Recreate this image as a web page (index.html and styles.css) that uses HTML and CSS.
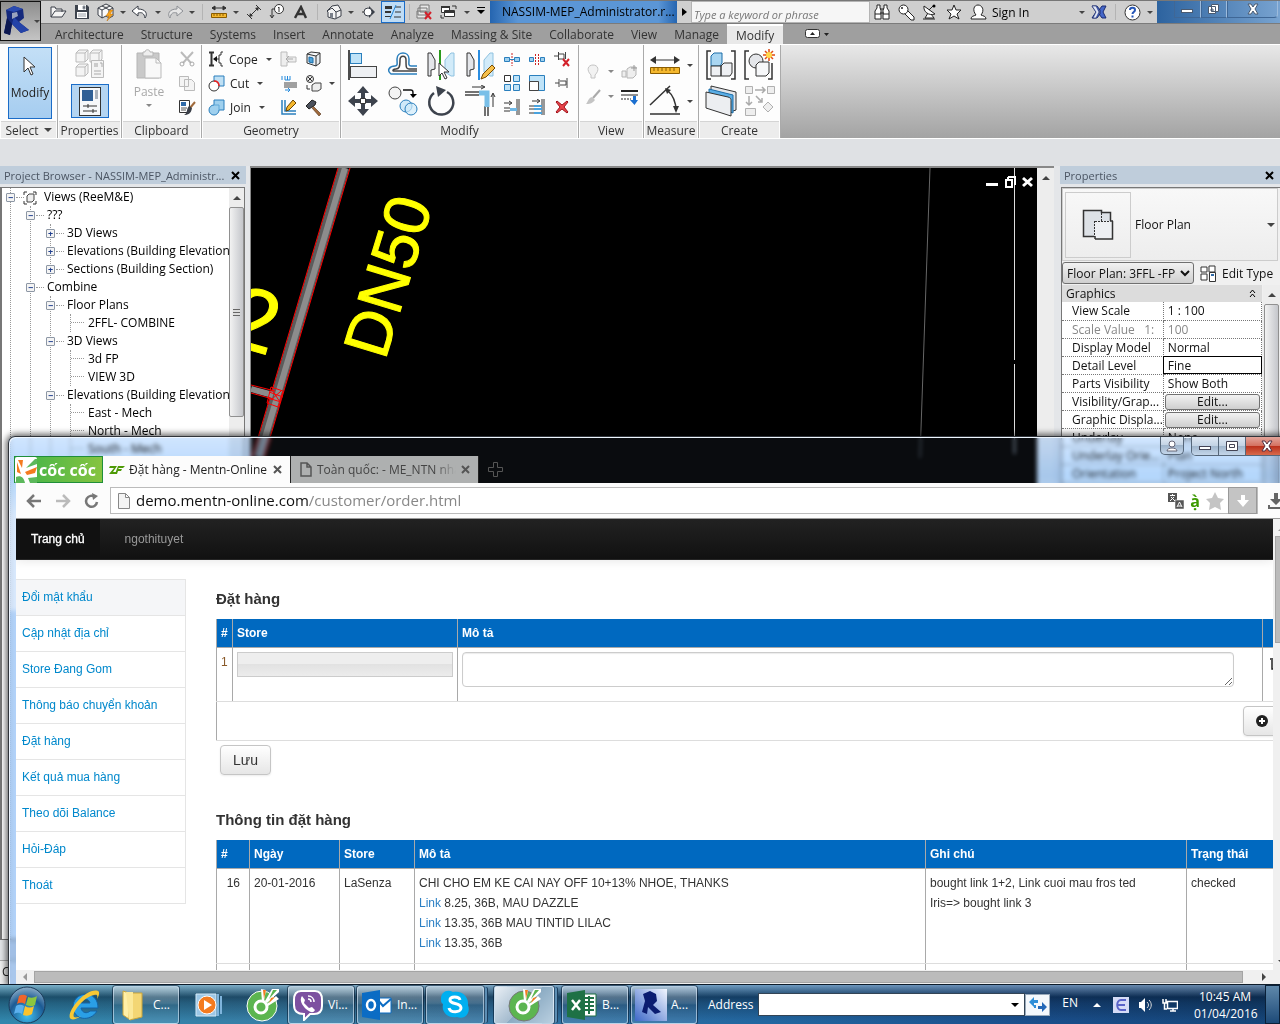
FILE: index.html
```html
<!DOCTYPE html>
<html lang="vi">

<head>
    <meta charset="UTF-8">
    <meta name="viewport" content="width=device-width, initial-scale=1.0">
    <title>Đặt hàng - Mentn-Online</title>
    <link rel="stylesheet" href="styles.css">
</head>

<body>
<div class="desktop">

    <!-- Revit window -->
    <div class="revit">
        <header class="revit-head">
            <button class="app-button" aria-label="Application menu">
                <svg width="32" height="32" viewBox="0 0 32 32">
                    <path d="M4 5l8-4 9 3 1 9-5 4 10 8-8 3-9-9-2 11-6-2 3-15z" fill="#15297c"/>
                    <path d="M4 5l8-4 9 3-9 3z" fill="#2b4bb0"/>
                    <path d="M12 12l5 5 10 8-8 3-9-9z" fill="#2443a8"/>
                    <path d="M5 13l5 6-2 11-6-2z" fill="#0c1850"/>
                    <path d="M10 8l5-1 1 4-6 3z" fill="#9aa3bd"/>
                </svg>
                <i class="caret"></i>
            </button>
            <div class="revit-bars">
                <div class="quick-bar">
                    <div class="quick-tools">
                        <button class="tool" aria-label="Open"><svg width="18" height="16" viewBox="0 0 18 16"><path d="M2 13V3h4l1 2h6v3M2 13l4-6h11l-4 6z" fill="#f4f4f4" stroke="#3a3f48"/></svg></button>
                        <button class="tool" aria-label="Save"><svg width="16" height="16" viewBox="0 0 16 16"><path d="M1 1h12l2 2v12H1z" fill="#3d434d"/><path d="M4 1h8v5H4zM3 8h10v6H3z" fill="#fff"/><path d="M9 2h2v3H9zM4 10h8M4 12h8" fill="#3d434d" stroke="#9aa0a8"/></svg></button>
                        <button class="tool" aria-label="Synchronize"><svg width="18" height="18" viewBox="0 0 18 18"><path d="M1 5l4-2 4 2 4-2 3 2v8l-4 2-3-2-4 2-4-3zM5 3l4-2 4 2M1 5l4 2v8M5 7l4-2 3 2v7M12 7l4-2" fill="#fafafa" stroke="#3a3f48"/><path d="M13 7l-4 6h3l-2 5 6-7h-3l3-4z" fill="#f5a21b" stroke="#c06c00" stroke-width=".5"/></svg></button>
                        <button class="drop" aria-label="Sync options"><i class="caret"></i></button>
                        <button class="tool" aria-label="Undo"><svg width="18" height="14" viewBox="0 0 18 14"><path d="M7 1L1 6l6 5V8c4-1 6 0 7 5 3-4 1-9-7-9z" fill="#fff" stroke="#3a3f48"/></svg></button>
                        <button class="drop" aria-label="Undo list"><i class="caret"></i></button>
                        <button class="tool" aria-label="Redo"><svg width="18" height="14" viewBox="0 0 18 14"><path d="M11 1l6 5-6 5V8C7 7 5 8 4 13 1 9 3 4 11 4z" fill="#e6e6e6" stroke="#8d9095"/></svg></button>
                        <button class="drop" aria-label="Redo list"><i class="caret"></i></button>
                        <span class="sep"></span>
                        <button class="tool" aria-label="Measure"><svg width="16" height="14" viewBox="0 0 16 14"><path d="M1 3h14M1 3l3-2v4zM15 3l-3-2v4z" stroke="#333" fill="#333"/><path d="M.5 8.500h15v4H.5z" fill="#f5b82e" stroke="#8a5c00"/><path d="M3 9v2M6 9v2M9 9v2M12 9v2" stroke="#8a5c00"/></svg></button>
                        <button class="drop" aria-label="Measure options"><i class="caret"></i></button>
                        <button class="tool" aria-label="Aligned dimension"><svg width="16" height="16" viewBox="0 0 16 16"><path d="M4 12l8-8" stroke="#333" fill="none"/><path d="M13 3l-1 4-3-3zM3 13l1-4 3 3z" fill="#333"/><path d="M10 1l5 5M1 10l5 5" stroke="#333"/></svg></button>
                        <button class="tool" aria-label="Tag"><svg width="16" height="16" viewBox="0 0 16 16"><circle cx="10" cy="5" r="4.500" fill="#fff" stroke="#333"/><path d="M9 4l1-1v5M5 5H3v8M1 11l2 3 2-3" stroke="#333" fill="none"/></svg></button>
                        <button class="tool" aria-label="Text"><svg width="14" height="14" viewBox="0 0 14 14"><path d="M1 13L7 2l5 11M4 9h6" fill="none" stroke="#333" stroke-width="2.400"/></svg></button>
                        <span class="sep"></span>
                        <button class="tool" aria-label="Default 3D view"><svg width="16" height="16" viewBox="0 0 16 16"><path d="M1 7l5-5 6-1 3 5v6l-6 3-7-2V8zM1 7l5-3 4 4v6M10 8l5-2" fill="#f4f4f4" stroke="#3a3f48"/><path d="M4 9h3v5L4 13z" fill="#7a808a"/></svg></button>
                        <button class="drop" aria-label="3D view options"><i class="caret"></i></button>
                        <button class="tool" aria-label="Section"><svg width="14" height="14" viewBox="0 0 14 14"><path d="M7 1l6 6-6 6z" fill="#3a3f48"/><circle cx="6" cy="7" r="4" fill="#fff" stroke="#3a3f48"/><path d="M0 7h2" stroke="#333"/></svg></button>
                        <button class="tool tool-on" aria-label="Thin lines"><svg width="18" height="16" viewBox="0 0 18 16"><path d="M1 2h7v3H1zM1 7h6v2H1zM1 12h6v1H1z" fill="#333"/><path d="M11 3h6M11 8h6M10 13h7" stroke="#333"/><path d="M12 1L6 15" stroke="#2389dc"/></svg></button>
                        <span class="sep"></span>
                        <button class="tool" aria-label="Close hidden windows"><svg width="18" height="16" viewBox="0 0 18 16"><path d="M4 1h9v7H4zM2 4h9v7H2zM1 7h9v7H1z" fill="#e8e8e8" stroke="#777"/><path d="M9 8l6 7M15 8l-6 7" stroke="#d3202a" stroke-width="2"/></svg></button>
                        <button class="tool" aria-label="Switch windows"><svg width="18" height="16" viewBox="0 0 18 16"><path d="M4.500 6.500h10v6h-10zM1.500 2.500h8v6h-8z" fill="#fff" stroke="#333"/><path d="M1 2h9v2H1zM4 7h11v2H4z" fill="#333"/><path d="M12 2h4v3M1 11v3h3" fill="none" stroke="#333"/></svg></button>
                        <button class="drop" aria-label="Windows list"><i class="caret"></i></button>
                        <button class="drop last" aria-label="Customize"><i class="caret caret-line"></i></button>
                    </div>
                    <div class="revit-title">NASSIM-MEP_Administrator.r...</div>
                    <button class="search-toggle" aria-label="Hide search"><svg width="5" height="8"><path d="M0 0l5 4-5 4z"/></svg></button>
                    <input class="keyword" type="text" placeholder="Type a keyword or phrase" aria-label="Search help">
                    <div class="info-tools">
                        <button class="tool" aria-label="Search"><svg width="16" height="16" viewBox="0 0 16 16"><path d="M3 1h3v3l1 2v9H1V7l2-3zM10 1h3v3l2 3v8H9V6l1-2zM6 5h4M6 9h4M1 10h6M9 10h6" fill="#fff" stroke="#222"/></svg></button>
                        <button class="tool" aria-label="Subscription"><svg width="17" height="17" viewBox="0 0 17 17"><path d="M6 9l7 7h3v-3L9 6" fill="#fff" stroke="#222"/><circle cx="5.500" cy="5.500" r="4.500" fill="#fff" stroke="#222"/><circle cx="4" cy="4" r="1" fill="#222"/></svg></button>
                        <button class="tool" aria-label="Communication"><svg width="16" height="16" viewBox="0 0 16 16"><path d="M6 9l-3 5h9l-3-4" fill="#fff" stroke="#222"/><path d="M2 2c-1 6 5 10 11 8z" fill="#fff" stroke="#222"/><path d="M7 6l5-5M1 15h12" stroke="#222"/><circle cx="12" cy="2" r="1.500"/></svg></button>
                        <button class="tool" aria-label="Favorites"><svg width="16" height="16" viewBox="0 0 16 16"><path d="M8 1l2 5h5l-4 4 2 5-5-3-5 3 2-5-4-4h5z" fill="#fff" stroke="#222"/></svg></button>
                        <button class="sign-in"><svg width="17" height="17" viewBox="0 0 17 17"><path d="M1 15c0-3 3-3 5-4-4-5-2-10 2-10s7 5 3 10c2 1 5 1 5 4z" fill="#fff" stroke="#222"/></svg>Sign In</button>
                        <button class="drop drop-far" aria-label="Account"><i class="caret"></i></button>
                        <button class="tool" aria-label="Exchange apps"><svg width="16" height="14" viewBox="0 0 16 14"><path d="M1 1h5l3 4v4l-3 4H1l4-6zM15 1h-4L8 5v4l3 4h4l-3-6z" fill="#4567c9" stroke="#1c2c70"/><path d="M1 1h4l3 6-3 6H2l3-6z" fill="#dfe6f6" stroke="#1c2c70" stroke-width=".6"/></svg></button>
                        <span class="sep"></span>
                        <button class="tool" aria-label="Help"><svg width="17" height="17" viewBox="0 0 17 17"><circle cx="8.500" cy="8.500" r="7.500" fill="#fff" stroke="#333"/><path d="M6 6c0-3 5-3 5 0 0 2-2.500 2-2.500 4M8.500 11.500v2" fill="none" stroke="#2556b8" stroke-width="2"/></svg></button>
                        <button class="drop" aria-label="Help options"><i class="caret"></i></button>
                    </div>
                    <div class="revit-controls">
                        <button aria-label="Minimize"><svg width="14" height="12"><rect x="1.500" y="6.500" width="11" height="3" fill="#fff" stroke="#4a5a70"/></svg></button>
                        <button aria-label="Restore"><svg width="14" height="12"><path d="M4.500 1.500h7v7h-7zM1.500 3.500h7v7h-7zM4 6h2v2H4z" fill="#fff" stroke="#4a5a70"/></svg></button>
                        <button class="wide" aria-label="Close"><svg width="14" height="12"><path d="M2 1h3l2 3 2-3h3L9 6l3 5H9L7 8l-2 3H2l3-5z" fill="#fff" stroke="#4a5a70"/></svg></button>
                    </div>
                </div>
                <nav class="ribbon-tabs">
                    <button>Architecture</button>
                    <button>Structure</button>
                    <button>Systems</button>
                    <button>Insert</button>
                    <button>Annotate</button>
                    <button>Analyze</button>
                    <button>Massing &amp; Site</button>
                    <button>Collaborate</button>
                    <button>View</button>
                    <button>Manage</button>
                    <button class="active">Modify</button>
                    <button class="ribbon-min" aria-label="Minimize ribbon"><svg width="25" height="10"><rect x=".5" y=".5" width="14" height="8" rx="2" fill="#fff" stroke="#333"/><path d="M5 6l2.500-3L10 6zM19 4h5l-2.500 3z" fill="#222"/></svg></button>
                </nav>
            </div>
        </header>

        <div class="ribbon">
            <section class="panel p-select">
                <div class="panel-body">
                    <button class="modify-on"><svg width="14" height="20" viewBox="0 0 14 20"><path d="M1 1v15l4-4 3 7 2-1-3-7h5z" fill="#fff" stroke="#333"/></svg>Modify</button>
                </div>
                <h2>Select <i class="caret big"></i></h2>
            </section>
            <section class="panel p-properties">
                <div class="panel-body stack">
                    <button class="big-icon" aria-label="Type properties"><svg width="32" height="30" viewBox="0 0 32 30"><g fill="#f4f4f4" stroke="#bbb"><path d="M2 4l3-3h9v9l-3 3H2zM16 4l3-3h9v9l-3 3h-9zM2 18l3-3h9v9l-3 3H2z"/><path d="M2 4h9v9M11 4l3-3M16 4h9v9M25 4l3-3M2 18h9v9M11 18l3-3" fill="none"/><path d="M17.500 11.500h12v17h-12z"/></g><path d="M20 14h4v4h-4z" fill="#ccc"/><path d="M26 14h2v4M20 22h7M20 25h7" stroke="#aaa" fill="none"/></svg></button>
                    <button class="big-icon prop-on" aria-label="Properties"><svg width="22" height="29" viewBox="0 0 22 29"><rect x=".5" y=".5" width="21" height="28" fill="#f6f8fa" stroke="#333"/><path d="M3 3h11v11H3z" fill="#2f5f95"/><path d="M16 3h3v9h-3z" fill="#aab2bb"/><path d="M4 19h14M4 24h14M9 17v4M14 22v4" stroke="#333"/></svg></button>
                </div>
                <h2>Properties</h2>
            </section>
            <section class="panel p-clipboard">
                <div class="panel-body">
                    <button class="paste" disabled><svg width="26" height="30" viewBox="0 0 26 30"><path d="M1 4h22v25H1z" fill="#c9c9c9" stroke="#b5b5b5"/><path d="M7 3h2c0-3 5-3 5 0h3v4H7z" fill="#eee" stroke="#b5b5b5"/><path d="M9 9h11l5 5v15H9z" fill="#f8f8f8" stroke="#bbb"/><path d="M20 9v5h5" fill="none" stroke="#bbb"/></svg>Paste<i class="caret"></i></button>
                    <div class="small-grid one">
                        <button aria-label="Cut"><svg width="16" height="16" viewBox="0 0 16 16"><path d="M2 1l10 11M14 1L4 12" stroke="#bbb" stroke-width="2"/><g fill="none" stroke="#aaa"><circle cx="3" cy="13" r="2"/><circle cx="13" cy="13" r="2"/></g></svg></button>
                        <button aria-label="Copy"><svg width="16" height="16" viewBox="0 0 16 16"><path d="M.5 1.500h9v10h-9zM5.500 4.500h7l3 3v8h-10z" fill="#f4f4f4" stroke="#bbb"/></svg></button>
                        <button aria-label="Match type"><svg width="18" height="17" viewBox="0 0 18 17"><path d="M1.500 1.500h10v12h-10z" fill="#fff" stroke="#333"/><path d="M3 3h5v4H3z" fill="#2f6aa8"/><path d="M3 9h6M3 11h5" stroke="#555"/><path d="M17 3l-5 6" stroke="#a06a3c" stroke-width="2"/><path d="M11 7l3 2c-1 6-4 7-8 7 4-2 2-6 5-9z" fill="#3a3f48"/></svg></button>
                    </div>
                </div>
                <h2>Clipboard</h2>
            </section>
            <section class="panel p-geometry">
                <div class="panel-body">
                    <div class="text-tools">
                        <button><svg width="16" height="16" viewBox="0 0 16 16"><path d="M1 1.500h5M1 14.500h5M3.500 2v12" stroke="#333" stroke-width="2" fill="none"/><path d="M15 1h-2v3h-2v8h2v3h2M11 8H6" stroke="#333" fill="none"/><path d="M5 8l4-3v6z" fill="#111"/></svg>Cope<i class="caret"></i></button>
                        <button><svg width="17" height="17" viewBox="0 0 17 17"><path d="M6 1h10v10H6z" fill="#bfe0f4" stroke="#2a7fbd"/><circle cx="6" cy="11" r="5" fill="#fff" stroke="#333"/><path d="M6 6c3 0 5 2 5 5" stroke="#e22" fill="none" stroke-width="1.500"/></svg>Cut<i class="caret"></i></button>
                        <button><svg width="17" height="17" viewBox="0 0 17 17"><path d="M6 1h10v10h-5a5 5 0 1 1-5-5z" fill="#9fd0ee" stroke="#2a7fbd"/><path d="M6 6h5v5" stroke="#5fa8d8" fill="none"/></svg>Join<i class="caret"></i></button>
                    </div>
                    <div class="small-grid two">
                        <button aria-label="Wall opening"><svg width="17" height="16" viewBox="0 0 17 16"><path d="M1 1h6v5h9v5H7v4H1z" fill="#eee" stroke="#bbb"/><path d="M13 8H6l3-3M6 8l3 3" stroke="#aaa" fill="none"/></svg></button>
                        <button aria-label="Split face"><svg width="16" height="16" viewBox="0 0 16 16"><path d="M1 3l9 2v10l-9-3zM10 5l4-3v10l-4 3M1 3l4-2 9 1" fill="#e8ecf0" stroke="#333"/><path d="M3 6l4 1v5l-4-1z" fill="#4ea3da" stroke="#1b6ca8"/></svg></button>
                        <button aria-label="Beam joins"><svg width="17" height="17" viewBox="0 0 17 17"><path d="M2 1v4M5 1v4h5V1M7.500 1v4M5 15h5M8 13l2 2-2 2" stroke="#2389dc" fill="none"/><path d="M4 8h13M4 10h13M4 12h13" stroke="#444"/></svg></button>
                        <button aria-label="Paint"><svg width="17" height="17" viewBox="0 0 17 17"><circle cx="5" cy="4" r="3.500" fill="#eee" stroke="#333"/><path d="M3 2l4 4M7 2L3 6" stroke="#333"/><path d="M7 10l3-2h6v6l-3 2H7z" fill="#eee" stroke="#444"/><path d="M2 10v4h3" stroke="#333" fill="none"/></svg></button>
                        <button aria-label="Edit wall joins"><svg width="18" height="17" viewBox="0 0 18 17"><path d="M2 1v14h14M5 1v11h11" stroke="#2a7fbd" stroke-width="1.500" fill="none"/><path d="M13 1l3 3-7 7-3 1 1-4z" fill="#f5b82e" stroke="#6b4300"/></svg></button>
                        <button aria-label="Demolish"><svg width="17" height="17" viewBox="0 0 17 17"><path d="M8 7l8 8-2 2-7-8" fill="#a06a3c" stroke="#53331a" stroke-width=".6"/><path d="M1 7l6-6 4 2-1 3-6 4z" fill="#4c525c" stroke="#222"/></svg></button>
                    </div>
                    <button class="drop mid" aria-label="Paint options"><i class="caret"></i></button>
                </div>
                <h2>Geometry</h2>
            </section>
            <section class="panel p-modify">
                <div class="panel-body">
                    <div class="big-grid four">
                        <button aria-label="Align"><svg width="32" height="32" viewBox="0 0 32 32"><path d="M2 1v30" stroke="#111" stroke-width="1.500"/><rect x="3.500" y="4.500" width="11" height="10" fill="#bfe3f8" stroke="#2a7fbd"/><rect x="3.500" y="17.500" width="26" height="11" fill="#eef0f3" stroke="#444"/></svg></button>
                        <button aria-label="Offset"><svg width="32" height="32" viewBox="0 0 32 32"><path d="M31 17h-6c-3 0-2-3-2-7 0-8-12-8-12 0 0 4 1 7-2 7-5 0-9 4-4 8h26" stroke="#2a7fbd" stroke-width="1.500" fill="none"/><path d="M31 20h-8c-3 0-3-2-3-9 0-5-6-5-6 0 0 7-1 9-4 9-3 0-4 2-2 2h23" stroke="#444" fill="none" stroke-width="1.500"/></svg></button>
                        <button aria-label="Mirror - pick axis"><svg width="32" height="32" viewBox="0 0 32 32"><path d="M3 4h3l4 7v9l-4 1v6H3z" fill="#e4e6ea" stroke="#333"/><path d="M29 4h-3l-6 7v12l6 4h3z" fill="#d2ebf9" stroke="#8fc2e0"/><path d="M15 1v30" stroke="#2a9a1c" stroke-width="2"/><path d="M14 14v13l3-3 3 6 2-1-3-6h5z" fill="#fff" stroke="#333"/></svg></button>
                        <button aria-label="Mirror - draw axis"><svg width="32" height="32" viewBox="0 0 32 32"><path d="M3 4h3l4 7v9l-4 1v6H3z" fill="#e4e6ea" stroke="#333"/><path d="M29 4h-3l-6 7v12l6 4h3z" fill="#d2ebf9" stroke="#8fc2e0"/><path d="M15 1v30" stroke="#2a8de0" stroke-width="2"/><path d="M28 16l3 3-9 9-5 2 2-5z" fill="#f7c04a" stroke="#7a4a00"/></svg></button>
                        <button aria-label="Move"><svg width="32" height="32" viewBox="0 0 32 32"><path d="M16 1l6 7h-4v5h-4V8h-4zM16 31l6-7h-4v-5h-4v5h-4zM1 16l7-6v4h5v4H8v4zM31 16l-7-6v4h-5v4h5v4z" fill="#3d434d"/><path d="M13.500 13.500h5v5h-5z" fill="#fff" stroke="#333"/></svg></button>
                        <button aria-label="Copy element"><svg width="32" height="32" viewBox="0 0 32 32"><circle cx="9" cy="8" r="6" fill="#f4f4f4" stroke="#444"/><path d="M17 5h8c2 0 2 1 2 5" fill="none" stroke="#111" stroke-width="1.500"/><path d="M24 9h7l-4 4z"/><circle cx="20" cy="21" r="6" fill="#cfe9f9" stroke="#2a7fbd"/><circle cx="25" cy="24" r="6" fill="#cfe9f9" fill-opacity=".7" stroke="#2a7fbd"/></svg></button>
                        <button aria-label="Rotate"><svg width="32" height="32" viewBox="0 0 32 32"><path d="M9 8a12 12 0 1 0 13-1" fill="none" stroke="#3d434d" stroke-width="2.500"/><path d="M11 1l10 4-8 7z" fill="#3d434d"/></svg></button>
                        <button aria-label="Trim"><svg width="32" height="32" viewBox="0 0 32 32"><path d="M1 7h14M1 10h14M24 21v10M21 21v10" stroke="#444" stroke-width="1.500"/><path d="M15 8h8v14" fill="none" stroke="#79bfe8" stroke-width="5"/><path d="M8 2h12M17 0l4 2-4 2M29 22V9M27 12l2-4 2 4" stroke="#333" fill="none"/></svg></button>
                    </div>
                    <div class="small-grid three">
                        <button aria-label="Split element"><svg width="16" height="16" viewBox="0 0 16 16"><path d="M.5 6.500h5v4h-5zM10.500 6.500h5v4h-5z" fill="#9fd0ee" stroke="#2a7fbd"/><path d="M8 2v13" stroke="#c22" stroke-dasharray="2 1"/><path d="M6 8.500h4" stroke="#2a7fbd"/></svg></button>
                        <button aria-label="Split with gap"><svg width="16" height="16" viewBox="0 0 16 16"><path d="M.5 6.500h4v4h-4zM11.500 6.500h4v4h-4z" fill="#9fd0ee" stroke="#2a7fbd"/><path d="M6.500 3v11M9.500 3v11" stroke="#c22" stroke-dasharray="2 1"/></svg></button>
                        <button aria-label="Unpin"><svg width="16" height="16" viewBox="0 0 16 16"><path d="M0 5h4M4.500 1v8M5 3h5v5H5M11.500 1v7" stroke="#444" fill="none"/><path d="M9 8l6 7M15 8l-6 7" stroke="#d3202a" stroke-width="2"/></svg></button>
                        <button aria-label="Array"><svg width="16" height="16" viewBox="0 0 16 16"><path d="M.5.5h6v6h-6z" fill="#fff" stroke="#333"/><path d="M9.500.5h6v6h-6zM.5 9.500h6v6h-6zM9.500 9.500h6v6h-6z" fill="#bfe3f8" stroke="#2a7fbd"/></svg></button>
                        <button aria-label="Scale"><svg width="16" height="16" viewBox="0 0 16 16"><path d="M.5.5h15v15H.5z" fill="#bfe3f8" stroke="#2a7fbd"/><path d="M.5 6.500h9v9h-9z" fill="#fff" stroke="#444"/></svg></button>
                        <button aria-label="Pin"><svg width="16" height="16" viewBox="0 0 16 16"><path d="M1 8h4M5 4v8M6 6h6v4H6M13 3v10" stroke="#444" fill="none"/></svg></button>
                        <button aria-label="Trim single"><svg width="16" height="16" viewBox="0 0 16 16"><path d="M0 4h7M5 2l3 2-3 2M13 0v16M15 0v16M0 9h6M0 12h6" stroke="#333" fill="none"/><path d="M6 10.500h7" stroke="#6db7e6" stroke-width="3"/></svg></button>
                        <button aria-label="Trim multiple"><svg width="16" height="16" viewBox="0 0 16 16"><path d="M3 2h7M8 0l3 2-3 2M13 0v16M15 0v16M0 7h6M0 10h6M0 14h6" stroke="#333" fill="none"/><path d="M5 7h8M5 10h8M5 14h8" stroke="#4aa3de" stroke-width="2"/></svg></button>
                        <button aria-label="Delete"><svg width="14" height="14" viewBox="0 0 14 14"><path d="M2 1l5 4 5-4 1 1-4 5 4 5-1 1-5-4-5 4-1-1 4-5-4-5z" fill="#e8434a" stroke="#a0141c"/></svg></button>
                    </div>
                </div>
                <h2>Modify</h2>
            </section>
            <section class="panel p-view">
                <div class="panel-body">
                    <div class="view-grid">
                        <button aria-label="Hide"><svg width="12" height="16" viewBox="0 0 12 16"><path d="M4 11C-1 6 1 1 6 1s7 5 2 10v3H4z" fill="#f2f2f2" stroke="#c4c4c4"/></svg></button>
                        <i class="caret"></i>
                        <button aria-label="Displace"><svg width="17" height="16" viewBox="0 0 17 16"><path d="M1 7h4v6H1zM6 5l3-2h6v8l-3 3H6z" fill="#eee" stroke="#b5b5b5"/><path d="M13 1v6M10 4h6" stroke="#999"/></svg></button>
                        <button aria-label="Override"><svg width="16" height="16" viewBox="0 0 16 16"><path d="M15 1L8 9" stroke="#aaa" stroke-width="2"/><path d="M7 8l3 3c-3 4-6 4-9 4 2-2 2-6 6-7z" fill="#c4c4c4"/></svg></button>
                        <i class="caret"></i>
                        <button aria-label="Linework"><svg width="17" height="16" viewBox="0 0 17 16"><path d="M0 2h17" stroke="#222" stroke-width="2"/><path d="M0 6h17" stroke="#222"/><path d="M0 10h10" stroke="#222" stroke-dasharray="2 1"/><path d="M12 7h3v4h2l-3.500 5L9 11h3z" fill="#1b6fd0"/></svg></button>
                    </div>
                </div>
                <h2>View</h2>
            </section>
            <section class="panel p-measure">
                <div class="panel-body">
                    <div class="big-grid drops">
                        <button aria-label="Measure distance"><svg width="32" height="32" viewBox="0 0 32 32"><path d="M3 11h26" stroke="#333"/><path d="M1 11l6-4v8zM31 11l-6-4v8z" fill="#333"/><path d="M1.500 18.500h29v6h-29z" fill="#f5b82e" stroke="#8a5c00"/><path d="M5 19v3M9 19v3M13 19v3M17 19v3M21 19v3M25 19v3" stroke="#8a5c00"/></svg></button>
                        <i class="caret"></i>
                        <button aria-label="Angular dimension"><svg width="32" height="32" viewBox="0 0 32 32"><path d="M1 20L21 1M1 29h30M18 5c6 5 9 12 9 21" fill="none" stroke="#333" stroke-width="1.500"/><path d="M16 3l6 2-4 4zM24 21h6l-3 7z" fill="#333"/></svg></button>
                        <i class="caret"></i>
                    </div>
                </div>
                <h2>Measure</h2>
            </section>
            <section class="panel p-create">
                <div class="panel-body">
                    <div class="big-grid pair">
                        <button aria-label="Create group"><svg width="32" height="32" viewBox="0 0 32 32"><path d="M6 2H2v28h4M26 2h4v28h-4" fill="none" stroke="#333" stroke-width="1.500"/><path d="M6 7l3-3h8v10l-2 3H6z" fill="#a9d6f2" stroke="#1b6ca8"/><path d="M6 17h10v10H6zM16 17l3-3h8v10l-2 3h-9z" fill="#eef0f3" stroke="#333"/></svg></button>
                        <button aria-label="Create similar"><svg width="34" height="32" viewBox="0 0 34 32"><path d="M6 2H2v28h4M25 30h4V14" fill="none" stroke="#333" stroke-width="1.500"/><circle cx="13" cy="12" r="7" fill="#e4e6ea" stroke="#333"/><path d="M13 16l3-3h10v11l-3 3H13z" fill="#f6f7f9" stroke="#333"/><path d="M26 0v12M20 6h12M22 2l8 8M30 2l-8 8" stroke="#e04a14" stroke-width="1.500"/><circle cx="26" cy="6" r="3" fill="#ffd84a"/></svg></button>
                        <button aria-label="Create assembly"><svg width="32" height="32" viewBox="0 0 32 32"><path d="M6 1l25 6v18l-3 1L6 19z" fill="#e4e6ea" stroke="#333"/><path d="M4 4l24 6v18L4 20z" fill="#5aaee6" stroke="#1b6ca8"/><path d="M1 7l22 5c3 1 3 2 3 4v15L1 23z" fill="#eceef1" stroke="#333"/></svg></button>
                        <button aria-label="Create parts"><svg width="32" height="32" viewBox="0 0 32 32"><g fill="#eee" stroke="#b0b0b0"><path d="M1.500 1.500h7v7h-7zM23.500 1.500h7v7h-7zM1.500 23.500h10v7h-10zM24 17l5 5-5 5-5-5z"/></g><path d="M11 5h10M18 2l3 3-3 3M5 11v9M2 17l3 3 3-3M12 11l6 6M18 13v4h-4" stroke="#aaa" fill="none" stroke-width="1.500"/></svg></button>
                    </div>
                </div>
                <h2>Create</h2>
            </section>
        </div>

        <div class="options-bar"></div>

        <main class="workspace">
            <aside class="project-browser">
                <div class="dock-title"><span>Project Browser - NASSIM-MEP_Administr...</span><button aria-label="Close project browser"><svg width="9" height="9"><path d="M1 1l7 7M8 1L1 8" stroke="#000" stroke-width="2"/></svg></button></div>
                <div class="tree-box">
                    <ul class="tree">
                        <li><i class="node">−</i><svg class="views-icon" width="14" height="14"><path d="M1 4V1h3M10 1h3v3M13 10v3h-3M4 13H1v-3" fill="none" stroke="#333"/><path d="M4 5l2-2h5v6l-2 2H4z" fill="#eee" stroke="#444"/></svg>Views (ReeM&amp;E)
                            <ul>
                                <li><i class="node">−</i>???
                                    <ul>
                                        <li><i class="node">+</i>3D Views</li>
                                        <li><i class="node">+</i>Elevations (Building Elevation</li>
                                        <li><i class="node">+</i>Sections (Building Section)</li>
                                    </ul>
                                </li>
                                <li><i class="node">−</i>Combine
                                    <ul>
                                        <li><i class="node">−</i>Floor Plans
                                            <ul class="leaves"><li>2FFL- COMBINE</li></ul>
                                        </li>
                                        <li><i class="node">−</i>3D Views
                                            <ul class="leaves"><li>3d FP</li><li>VIEW 3D</li></ul>
                                        </li>
                                        <li><i class="node">−</i>Elevations (Building Elevation
                                            <ul class="leaves"><li>East - Mech</li><li>North - Mech</li><li>South - Mech</li></ul>
                                        </li>
                                    </ul>
                                </li>
                            </ul>
                        </li>
                    </ul>
                    <div class="scroll tree-scroll"><i class="up"></i><span class="thumb"><b></b></span></div>
                </div>
            </aside>

            <div class="drawing">
                <div class="canvas">
                    <svg class="plan" width="100%" height="100%">
                        <path d="M93 0L7 290" stroke="#5c5c5c" stroke-width="11"/>
                        <path d="M94 0L8 290" stroke="#8c8c8c" stroke-width="6"/>
                        <path d="M87 0L1 290M99 0L13 290" stroke="red"/>
                        <path d="M0 221l22 6" stroke="#8c8c8c" stroke-width="6"/>
                        <path d="M0 217l24 6M0 225l22 6" stroke="red"/>
                        <path d="M20 219l12 4-5 16-11-4zM18 224l14 5M17 230l13 4M20 232l10-9M21 222l8 12" fill="none" stroke="red"/>
                        <text class="tag" transform="translate(134 193) rotate(-73)">DN50</text>
                        <text class="tag two" transform="translate(-5 181) rotate(16)" text-anchor="middle">2</text>
                        <path d="M679 0l-10 290" stroke="#666"/>
                        <path d="M763.500 0v192M763.500 196v90" stroke="#ddd"/>
                    </svg>
                    <div class="mdi-buttons">
                        <button aria-label="Minimize view"><svg width="12" height="12"><path d="M0 7h12v3H0z" fill="#fff"/></svg></button>
                        <button aria-label="Restore view"><svg width="12" height="12"><path d="M4 1h7v8M4 1v3" fill="none" stroke="#fff" stroke-width="2"/><path d="M2 4h6v7H2z" fill="#000" stroke="#fff" stroke-width="2"/></svg></button>
                        <button aria-label="Close view"><svg width="12" height="12"><path d="M1 2l9 8M10 2l-9 8" stroke="#fff" stroke-width="3"/></svg></button>
                    </div>
                </div>
                <div class="scroll"><i class="up"></i></div>
            </div>

            <aside class="properties">
                <div class="dock-title"><span>Properties</span><button aria-label="Close properties"><svg width="9" height="9"><path d="M1 1l7 7M8 1L1 8" stroke="#000" stroke-width="2"/></svg></button></div>
                <div class="props-box">
                    <button class="type-selector">
                        <span class="type-pic"><svg width="32" height="32" viewBox="0 0 32 32"><path d="M1 1h18v2h10v9h-16v15H1z" fill="#dde1e6"/><path d="M12 27.500H1.500v-26h18v2h9V12" fill="none" stroke="#333" stroke-width="1.500"/><path d="M19.500 4v8" stroke="#333" stroke-dasharray="2 1"/><path d="M13 12h18v18H13z" fill="#eef0f3"/><path d="M13 30h17.500V12M13 27v3M28 12h3" fill="none" stroke="#333" stroke-width="1.500"/><path d="M13 12.500h15M12.500 12v16" stroke="#333" stroke-dasharray="2 1"/></svg></span>
                        Floor Plan
                        <i class="caret big"></i>
                    </button>
                    <div class="instance-row">
                        <select aria-label="Instance"><option>Floor Plan: 3FFL -FP</option></select>
                        <button class="edit-type"><svg width="17" height="17" viewBox="0 0 17 17"><path d="M1 2h6v5H1zM9 1h6v6H9zM1 9h6v6H1z" fill="#fff" stroke="#333"/><path d="M9.500 7.500h6v9h-6z" fill="#fff" stroke="#333"/><path d="M11 9h3v2h-3z" fill="#2f6aa8"/></svg>Edit Type</button>
                    </div>
                    <div class="props-scroll">
                        <table class="props">
                            <thead><tr><th colspan="2">Graphics <svg width="7" height="9"><path d="M1 4l2.500-3L6 4M1 8l2.500-3L6 8" fill="none" stroke="#000"/></svg></th></tr></thead>
                            <tbody>
                                <tr><td>View Scale</td><td>1 : 100</td></tr>
                                <tr class="off"><td>Scale Value &nbsp; 1:</td><td>100</td></tr>
                                <tr><td>Display Model</td><td>Normal</td></tr>
                                <tr><td>Detail Level</td><td class="focus">Fine</td></tr>
                                <tr><td>Parts Visibility</td><td>Show Both</td></tr>
                                <tr><td>Visibility/Grap...</td><td class="has-btn"><button>Edit...</button></td></tr>
                                <tr><td>Graphic Displa...</td><td class="has-btn"><button>Edit...</button></td></tr>
                                <tr><td>Underlay</td><td>None</td></tr>
                                <tr><td>Underlay Orie...</td><td>Plan</td></tr>
                                <tr><td>Orientation</td><td>Project North</td></tr>
                            </tbody>
                        </table>
                        <div class="scroll"><i class="up"></i><span class="thumb"></span></div>
                    </div>
                </div>
            </aside>
        </main>
        <div class="status-bar">C</div>
    </div>

    <!-- Browser window -->
    <div class="glass"></div>
    <div class="browser">
        <div class="caption">
            <button class="cap user" aria-label="Profile"><svg width="14" height="12"><circle cx="7" cy="4" r="3" fill="#fff" stroke="#667"/><path d="M2 11c0-4 10-4 10 0z" fill="#fff" stroke="#667"/></svg></button>
            <div class="cap-group">
                <button class="cap" aria-label="Minimize window"><svg width="14" height="12"><rect x="1.500" y="6.500" width="11" height="3" fill="#fff" stroke="#445"/></svg></button>
                <button class="cap" aria-label="Maximize window"><svg width="14" height="12"><path d="M1.500 1.500h11v9h-11zM4.500 4.500h5v3h-5z" fill="#fff" stroke="#445"/></svg></button>
                <button class="cap close" aria-label="Close window"><svg width="14" height="12"><path d="M2 1h3l2 3 2-3h3L9 6l3 5H9L7 8l-2 3H2l3-5z" fill="#fff" stroke="#534"/></svg></button>
            </div>
        </div>
        <div class="tab-strip">
            <button class="coccoc"><svg width="24" height="26" viewBox="0 0 24 26"><rect width="22" height="26" rx="2" fill="#fff"/><path d="M3 3h5l-1 8z" fill="#f47b20"/><path d="M11 11l9-9h2v5z" fill="#5cb85c"/><path d="M2 5l4 12-4-2z" fill="#f47b20"/><path d="M10 15l12-5-2 6-8 2z" fill="#f47b20"/><path d="M1 20c5-2 8 1 9 6H1zM13 21l9-1v6h-7z" fill="#5cb85c"/></svg>cốc cốc</button>
            <div class="tab active"><svg width="16" height="10" viewBox="0 0 16 10"><path d="M1 1h7L4 7h4l-1 2H0l5-6H0zM9 1h7l-2 2h-4l-1 1h4l-1 2H9L8 9H6z" fill="#4e9a06"/></svg><span>Đặt hàng - Mentn-Online</span><button aria-label="Close tab"><svg width="9" height="9"><path d="M1 1l7 7M8 1L1 8" stroke="#555" stroke-width="2"/></svg></button></div>
            <div class="tab"><svg width="12" height="15" viewBox="0 0 12 15"><path d="M1 1h6l4 4v9H1zM7 1v4h4" fill="none" stroke="#555" stroke-width="1.500"/></svg><span>Toàn quốc: - ME_NTN nhậ</span><button aria-label="Close tab"><svg width="9" height="9"><path d="M1 1l7 7M8 1L1 8" stroke="#555" stroke-width="2"/></svg></button></div>
            <button class="new-tab" aria-label="New tab"><svg width="15" height="15"><path d="M5.500.5h4v5h5v4h-5v5h-4v-5h-5v-4h5z" fill="none" stroke="#555"/></svg></button>
        </div>
        <div class="toolbar">
            <button aria-label="Back"><svg width="16" height="14"><path d="M15 7H2M8 1L2 7l6 6" fill="none" stroke="#777" stroke-width="2.500"/></svg></button>
            <button aria-label="Forward"><svg width="16" height="14"><path d="M1 7h13M8 1l6 6-6 6" fill="none" stroke="#bbb" stroke-width="2.500"/></svg></button>
            <button aria-label="Reload"><svg width="16" height="16"><path d="M13 9a5.500 5.500 0 1 1-2-5" fill="none" stroke="#777" stroke-width="2.500"/><path d="M8 0l6 3-5 4z" fill="#777"/></svg></button>
            <div class="address">
                <svg width="12" height="16" viewBox="0 0 12 16"><path d="M.5.5h7l4 4v11H.5zM7.500.5v4h4" fill="#f4f4f4" stroke="#888"/></svg>
                <a href="#">demo.mentn-online.com<span>/customer/order.html</span></a>
                <svg width="16" height="16" viewBox="0 0 16 16"><path d="M0 0h9v9H0z" fill="#555"/><path d="M2 2.500h5M4.500 1v1M3 4l4 4M6 4L2 8" stroke="#fff"/><path d="M7 7h9v9H7z" fill="#555" stroke="#fff" stroke-width=".5"/><path d="M9 14l2.500-5 2.500 5M10 13h3" stroke="#fff" fill="none"/></svg>
                <b class="spell">ạ̀</b>
                <svg width="18" height="18" viewBox="0 0 18 18"><path d="M9 0l3 6 6 1-4 4 1 7-6-3-6 3 1-7-4-4 6-1z" fill="#c4c4c4"/></svg>
                <button class="save-page" aria-label="Save page"><svg width="12" height="12"><path d="M4 0h4v5h4l-6 7-6-7h4z" fill="#fff"/></svg></button>
            </div>
            <button class="downloads" aria-label="Downloads"><svg width="16" height="16"><path d="M6 0h4v6h4l-6 6-6-6h4z" fill="#666"/><path d="M1 12v3h14v-3" fill="none" stroke="#666" stroke-width="2"/></svg></button>
        </div>

        <div class="viewport">
            <div class="page">
                <nav class="navbar">
                    <a class="active" href="#">Trang chủ</a>
                    <a href="#">ngothituyet</a>
                </nav>
                <div class="columns">
                    <nav class="sidebar">
                        <a class="active" href="#">Đổi mật khẩu</a>
                        <a href="#">Cập nhật địa chỉ</a>
                        <a href="#">Store Đang Gom</a>
                        <a href="#">Thông báo chuyển khoản</a>
                        <a href="#">Đặt hàng</a>
                        <a href="#">Kết quả mua hàng</a>
                        <a href="#">Theo dõi Balance</a>
                        <a href="#">Hỏi-Đáp</a>
                        <a href="#">Thoát</a>
                    </nav>
                    <form class="content">
                        <h3>Đặt hàng</h3>
                        <table class="grid order">
                            <colgroup><col class="c-num"><col class="c-shop"><col><col class="c-del"></colgroup>
                            <thead><tr><th>#</th><th>Store</th><th>Mô tả</th><th></th></tr></thead>
                            <tbody>
                                <tr>
                                    <td class="row-no">1</td>
                                    <td><input class="store-input" type="text" aria-label="Store"></td>
                                    <td><textarea aria-label="Mô tả"></textarea></td>
                                    <td><button class="trash" type="button" aria-label="Xóa"><svg width="12" height="14"><path d="M0 3h12M4 3V1h4v2M2 4v9h8V4M5 5v6M7 5v6" fill="none" stroke="#222" stroke-width="1.500"/></svg></button></td>
                                </tr>
                                <tr class="add-row">
                                    <td colspan="4"><button class="btn" type="button" aria-label="Thêm"><svg width="12" height="12"><circle cx="6" cy="6" r="6" fill="#222"/><path d="M6 3v6M3 6h6" stroke="#fff" stroke-width="2"/></svg></button></td>
                                </tr>
                            </tbody>
                        </table>
                        <button class="btn save" type="button">Lưu</button>

                        <h3>Thông tin đặt hàng</h3>
                        <table class="grid history">
                            <colgroup><col class="c-id"><col class="c-date"><col class="c-store"><col><col class="c-note"><col class="c-state"></colgroup>
                            <thead><tr><th>#</th><th>Ngày</th><th>Store</th><th>Mô tả</th><th>Ghi chú</th><th>Trạng thái</th></tr></thead>
                            <tbody>
                                <tr>
                                    <td class="num">16</td>
                                    <td>20-01-2016</td>
                                    <td>LaSenza</td>
                                    <td>CHI CHO EM KE CAI NAY OFF 10+13% NHOE, THANKS<br><a href="#">Link</a> 8.25, 36B, MAU DAZZLE<br><a href="#">Link</a> 13.35, 36B MAU TINTID LILAC<br><a href="#">Link</a> 13.35, 36B</td>
                                    <td>bought link 1+2, Link cuoi mau fros ted<br>Iris=&gt; bought link 3</td>
                                    <td>checked</td>
                                </tr>
                                <tr><td></td><td></td><td></td><td></td><td></td><td></td></tr>
                            </tbody>
                        </table>
                    </form>
                </div>
            </div>
            <div class="v-scroll"><i class="up"></i><span></span><i class="down"></i></div>
            <div class="h-scroll"><i class="left"></i><span></span><i class="right"></i></div>
        </div>
    </div>

    <!-- Taskbar -->
    <footer class="taskbar">
        <button class="start" aria-label="Start"><svg width="38" height="38" viewBox="0 0 38 38"><defs><radialGradient id="orb" cx=".5" cy=".8" r=".8"><stop offset="0" stop-color="#3fc0f0"/><stop offset=".6" stop-color="#1c5a94"/><stop offset="1" stop-color="#8fb0c8"/></radialGradient></defs><circle cx="19" cy="19" r="18" fill="url(#orb)" stroke="#1b3b5a"/><path d="M11 10c3-2 6-1 8 0l-2 8c-2-1-5-2-8 0z" fill="#f0652a"/><path d="M20 11c3 1 6 1 9-1l-2 9c-3 2-6 1-9 0z" fill="#8cc63f"/><path d="M8 20c3-2 6-1 8 0l-2 8c-2-1-5-2-8 0z" fill="#5cb0ee"/><path d="M17 20c3 2 6 2 9 0l-2 8c-3 2-6 2-9 1z" fill="#fcc32c"/></svg></button>
        <button class="pin ie" aria-label="Internet Explorer"><svg width="34" height="34" viewBox="0 0 34 34"><path d="M31 20H14c1 5 6 6 9 3h7C24 34 6 33 6 18 7 3 31 1 31 20zM14 15h9c-1-5-8-5-9 0z" fill="#2a9fe6" stroke="#1463a5"/><path d="M4 31C-3 27 18-1 31 3c2 1 1 5-1 8 1-4 0-5-3-4C16 9 4 26 7 29c2 1 5 0 7-1-4 3-8 4-10 3z" fill="#f8c834"/></svg></button>
        <button class="task"><svg width="32" height="32" viewBox="0 0 32 32"><path d="M6 2l6 2v26l-6-4z" fill="#fff0a8" stroke="#c9a53a"/><path d="M12 4h13v24l-12 3z" fill="#f3d674" stroke="#c9a53a"/><path d="M9 3h7v26l-4 2z" fill="#fbe898"/></svg>C...</button>
        <button class="pin" aria-label="Media Player"><svg width="28" height="28" viewBox="0 0 28 28"><path d="M1 3h20v22H1z" fill="#9cc7e6" stroke="#d6ebf8"/><path d="M23 3v22M26 5v18" stroke="#7fb4dc" stroke-width="2"/><circle cx="12" cy="14" r="9" fill="#f47b20" stroke="#fff"/><path d="M9 9l8 5-8 5z" fill="#fff"/></svg></button>
        <button class="pin" aria-label="Cốc Cốc"><svg width="34" height="34" viewBox="0 0 34 34"><circle cx="17" cy="18" r="15" fill="#5cb550" stroke="#fff"/><path d="M17 14L16 1l5 1-2 11zM20 13l7-12h7v3L22 15zM22 16l9-8 3 3-11 7z" fill="#fff"/><path d="M18 2h3l-2 9zM26 10l4-1-6 6z" fill="#f47b20"/><path d="M28 2h4l-8 9z" fill="#5cb550"/><circle cx="16" cy="19" r="6" fill="#5cb550" stroke="#fff" stroke-width="3"/></svg></button>
        <button class="task"><svg width="32" height="32" viewBox="0 0 32 32"><path d="M9 2h14c5 0 7 3 7 9v6c0 6-3 8-8 8h-4l-6 6v-6C4 25 2 21 2 16v-5c0-6 2-9 7-9z" fill="#7d51a0" stroke="#fff" stroke-width="2"/><path d="M10 7l3 4-1 3 5 5 3-1 3 3c-2 4-5 2-9-1-4-4-7-9-4-13z" fill="#fff"/><path d="M16 7c4 0 6 3 6 6M16 10c2 0 3 1 3 3" fill="none" stroke="#fff" stroke-width="1.500"/></svg>Vi...</button>
        <button class="task"><svg width="32" height="32" viewBox="0 0 32 32"><path d="M16 9h14v15H16z" fill="#fff" stroke="#0b6cc4"/><path d="M16 10l6 7 8-7" fill="none" stroke="#0b6cc4" stroke-width="2"/><path d="M1 4l18-3v30L1 28z" fill="#0b6cc4"/><ellipse cx="10" cy="16" rx="4" ry="5" fill="none" stroke="#fff" stroke-width="2.500"/></svg>In...</button>
        <button class="task icon-only stacked" aria-label="Skype"><svg width="32" height="32" viewBox="0 0 32 32"><path d="M2 10C2 3 8 0 14 3c9-2 16 5 15 13 3 8-3 15-11 12C9 30 2 23 4 15 2 14 2 12 2 10z" fill="#00aff0"/><path d="M21 11c-1-4-10-4-10 0 0 5 11 2 11 8 0 5-11 5-12 0" fill="none" stroke="#fff" stroke-width="3"/></svg></button>
        <button class="task icon-only stacked current" aria-label="Cốc Cốc windows"><svg width="34" height="34" viewBox="0 0 34 34"><circle cx="17" cy="18" r="15" fill="#5cb550" stroke="#777"/><path d="M17 14L16 1l5 1-2 11zM20 13l7-12h7v3L22 15zM22 16l9-8 3 3-11 7z" fill="#fff"/><path d="M18 2h3l-2 9zM26 10l4-1-6 6z" fill="#f47b20"/><path d="M28 2h4l-8 9z" fill="#5cb550"/><circle cx="16" cy="19" r="6" fill="#5cb550" stroke="#fff" stroke-width="3"/></svg></button>
        <button class="task"><svg width="32" height="32" viewBox="0 0 32 32"><path d="M17 5h13v22H17z" fill="#fff" stroke="#1e7145"/><path d="M19 9h9M19 13h9M19 17h9M19 21h9M23 7v18" stroke="#1e7145" stroke-width="2"/><path d="M1 4l18-3v30L1 28z" fill="#1e7145"/><path d="M6 11l8 10M14 11L6 21" stroke="#fff" stroke-width="2.500"/></svg>B...</button>
        <button class="task"><svg width="32" height="32" viewBox="0 0 32 32"><defs><linearGradient id="rv" x1="0" y1="1" x2="1" y2="0"><stop offset="0" stop-color="#3d68c8"/><stop offset="1" stop-color="#f2f6ff"/></linearGradient></defs><path d="M0 0h32v32H0z" fill="url(#rv)"/><path d="M8 5l7-3 6 3 1 7-4 4 8 7-6 2-7-7-1 7-5-2 3-11z" fill="#0b1c70"/></svg>A...</button>
        <label class="addr-label" for="addr">Address</label>
        <div class="addr-box"><input id="addr" type="text"><i class="caret big"></i></div>
        <button class="refresh" aria-label="Refresh"><svg width="18" height="16" viewBox="0 0 18 16"><path d="M0 5l5-5v3h4v3H5v4zM5 8h2v3H5z" fill="#2f8fd8"/><path d="M18 10l-5 5v-3H9V9h4V5z" fill="#2468b8"/></svg></button>
        <span class="lang">EN</span>
        <div class="tray">
            <button aria-label="Hidden icons"><svg width="8" height="4"><path d="M4 0l4 4H0z" fill="#fff"/></svg></button>
            <button aria-label="Keyboard"><svg width="16" height="16"><path d="M0 0h16v16H0z" fill="#d6dcf6"/><path d="M13 3H8c-5 0-5 10 0 10h5M4 8h8" fill="none" stroke="#5a63c8" stroke-width="2"/></svg></button>
            <button aria-label="Volume"><svg width="15" height="14"><path d="M1 4h2l4-4v14L3 10H1z" fill="#fff"/><path d="M9 4c2 2 2 4 0 6M11 2c3 3 3 7 0 10" fill="none" stroke="#ddd"/></svg></button>
            <button aria-label="Network"><svg width="16" height="14"><path d="M5.500 3.500h10v7h-10zM8 13h6M11 11v2M1 1v4h3V1M2.500 5v6H5" fill="none" stroke="#fff" stroke-width="1.500"/></svg></button>
        </div>
        <time>10:45 AM<br>01/04/2016</time>
        <button class="show-desktop" aria-label="Show desktop"></button>
    </footer>
</div>
</body>

</html>
```
FILE: styles.css
```css
* {
    box-sizing: border-box;
}

body {
    margin: 0;
    font-family: "Open Sans", "Noto Sans", sans-serif;
    font-size: 12px;
    color: #222;
}

button,
input,
select,
textarea {
    font: inherit;
    color: inherit;
    margin: 0;
}

button {
    display: flex;
    align-items: center;
    justify-content: center;
    padding: 0;
    border: 0;
    background: none;
    white-space: nowrap;
}

svg {
    flex: none;
}

h2,
h3,
ul {
    margin: 0;
    padding: 0;
    list-style: none;
}

.desktop {
    position: relative;
    display: flex;
    flex-direction: column;
    height: 100vh;
    overflow: hidden;
    background: #dfe1e4;
}

.caret {
    flex: none;
    width: 0;
    height: 0;
    border: 3px solid transparent;
    border-top-color: #444;
    border-bottom: 0;
}

.caret.big {
    border-width: 4px;
    border-bottom: 0;
}

.caret-line {
    position: relative;
    border-width: 4px;
    border-bottom: 0;
    border-top-color: #000;
}

.caret-line::before {
    content: "";
    position: absolute;
    left: -4px;
    top: -7px;
    width: 8px;
    height: 1px;
    background: #000;
}

/* ---------- Revit ---------- */

.revit {
    flex: 1;
    display: flex;
    flex-direction: column;
    min-height: 0;
}

.revit-head {
    display: flex;
    flex: none;
    height: 44px;
    background: #9f9f9f;
    border-top: 1px solid #777;
}

.app-button {
    width: 41px;
    height: 40px;
    border: 1px solid #111;
    background: linear-gradient(#8e8e8e, #c4c4c4);
}

.revit-bars {
    flex: 1;
    min-width: 0;
}

.quick-bar {
    display: flex;
    height: 23px;
    background: #cfcfcf;
    border-bottom: 1px solid #7b7b7b;
}

.quick-tools {
    display: flex;
    padding-left: 5px;
    width: 449px;
}

.tool {
    width: 24px;
}

.tool-on {
    border: 1px solid #1a6cc8;
    background: #bfdcf5;
}

.drop {
    width: 11px;
}

.drop.last {
    width: 18px;
}

.sep {
    width: 1px;
    margin: 3px 4px;
    background: #b4b4b4;
}

.revit-title {
    flex: none;
    width: 187px;
    padding-left: 12px;
    line-height: 22px;
    color: #000;
    background: linear-gradient(90deg, #2565b0, #5b96d6 15%, #5b96d6 90%, #2565b0);
    white-space: nowrap;
}

.search-toggle {
    width: 14px;
}

.keyword {
    width: 179px;
    padding: 4px 2px 0;
    border: 1px solid #b4b4b4;
    background: #f6f6f6;
    font-size: 11px;
    font-style: italic;
}

.keyword::placeholder {
    color: #777;
}

.info-tools {
    display: flex;
    flex: 1;
    padding-right: 2px;
}

.sign-in {
    gap: 5px;
    padding-left: 4px;
    color: #000;
}

.drop-far {
    margin-left: auto;
}

.revit-controls {
    display: flex;
    width: 123px;
    padding: 0 2px 5px 17px;
    background: linear-gradient(90deg, #2d639f, #78a3d0);
}

.revit-controls button {
    flex: 1;
    border: 1px solid #3f6796;
    border-top: 0;
    border-right-color: #9dbbdc;
}

.revit-controls .wide {
    flex: 2;
    border-radius: 0 0 4px 0;
}

.ribbon-tabs {
    display: flex;
    height: 20px;
    padding-left: 5px;
}

.ribbon-tabs button {
    padding: 0 8px 0 9px;
    color: #333;
}

.ribbon-tabs .active {
    padding: 0 9px;
    border-top: 2px solid #fff;
    background: #e9e9e9;
}

.ribbon-tabs .ribbon-min {
    padding-left: 22px;
}

.ribbon {
    display: flex;
    flex: none;
    height: 95px;
    border-top: 1px solid #fff;
    border-bottom: 1px solid #fff;
    background: linear-gradient(#e8e8e8, #a3a3a3);
}

.panel {
    display: flex;
    flex-direction: column;
    padding: 0 1px;
    background: #fdfdfd;
    border-right: 1px solid #aaa;
}

.panel-body {
    display: flex;
    flex: 1;
    padding: 2px 1px 0;
}

.panel h2 {
    display: flex;
    align-items: center;
    justify-content: center;
    gap: 5px;
    height: 17px;
    border-top: 1px solid #d4d4d4;
    background: #ececec;
    font-size: 12px;
    font-weight: normal;
    color: #333;
}

.p-select { width: 58px; }
.p-properties { width: 64px; }
.p-clipboard { width: 80px; }
.p-geometry { width: 139px; }
.p-modify { width: 238px; }
.p-view { width: 65px; }
.p-measure { width: 55px; }
.p-create { width: 82px; }

.modify-on {
    flex-direction: column;
    justify-content: flex-start;
    gap: 8px;
    width: 44px;
    height: 72px;
    margin-left: 6px;
    padding-top: 8px;
    border: 1px solid #1a6cc8;
    background: linear-gradient(#c3dff6, #a6cdf0);
}

.stack {
    flex-direction: column;
    align-items: center;
    gap: 3px;
}

.big-icon {
    width: 38px;
    height: 34px;
}

.prop-on {
    border: 1px solid #1a6cc8;
    background: #b4d5f2;
}

.paste {
    flex-direction: column;
    justify-content: flex-start;
    gap: 4px;
    width: 50px;
    padding-top: 2px;
    color: #a8a8a8;
}

.paste .caret,
.view-grid .caret {
    border-top-color: #888;
}

.small-grid {
    display: grid;
    grid-auto-rows: 24px;
}

.small-grid button {
    width: 25px;
}

.one { grid-template-columns: 25px; }
.two { grid-template-columns: 25px 25px; }
.three { grid-template-columns: 25px 25px 25px; }

.text-tools {
    width: 72px;
    padding-left: 4px;
}

.text-tools button {
    height: 24px;
    gap: 5px;
}

.text-tools .caret {
    margin-left: 3px;
}

.mid {
    height: 72px;
}

.big-grid {
    display: grid;
    grid-auto-rows: 36px;
    align-items: center;
}

.four { grid-template-columns: repeat(4, 39px); }
.pair { grid-template-columns: 39px 39px; }
.drops { grid-template-columns: 38px 12px; }

.view-grid {
    display: grid;
    grid-template-columns: 24px 12px 24px;
    grid-auto-rows: 25px;
    align-content: center;
    align-items: center;
}

.view-grid .caret,
.drops .caret {
    justify-self: center;
}

.options-bar {
    flex: none;
    height: 27px;
    background: #dfe1e4;
}

.workspace {
    display: flex;
    flex: 1;
    gap: 4px;
    min-height: 0;
    background: #e4e6e9;
}

.dock-title {
    display: flex;
    align-items: center;
    justify-content: space-between;
    height: 18px;
    padding: 0 6px 0 4px;
    background: #bfcddb;
    color: #4b5563;
    font-size: 11px;
    white-space: nowrap;
}

.project-browser {
    display: flex;
    flex-direction: column;
    width: 246px;
}

.tree-box {
    display: flex;
    flex: 1;
    min-height: 0;
    margin: 3px 1px 20px 0;
    border: 1px solid #777;
    border-left-width: 2px;
    background: #fff;
    overflow: hidden;
}

/* the dotted line of each level runs through its expand boxes */
.tree,
.tree ul {
    border-left: 1px dotted #999;
}

.tree {
    flex: 1;
    min-width: 0;
    margin-left: 8px;
    line-height: 18px;
    color: #000;
    white-space: nowrap;
}

.tree ul {
    margin-left: 19px;
}

.node {
    position: relative;
    display: inline-block;
    width: 9px;
    height: 9px;
    margin: 0 12px 0 -5px;
    border: 1px solid #8d97a5;
    border-radius: 1px;
    background: #f4f4f4;
    color: #1f3f8f;
    font-size: 9px;
    font-style: normal;
    font-weight: bold;
    line-height: 7px;
    text-align: center;
}

.node::after {
    content: "";
    position: absolute;
    top: 3px;
    left: 9px;
    width: 8px;
    border-top: 1px dotted #999;
}

.tree > li > .node {
    margin-right: 8px;
}

.leaves li::before {
    content: "";
    display: inline-block;
    width: 13px;
    margin: 0 4px 4px 0;
    border-top: 1px dotted #999;
}

.views-icon {
    margin-right: 7px;
    vertical-align: middle;
}

.scroll {
    display: flex;
    flex-direction: column;
    align-items: center;
    flex: none;
    width: 17px;
    background: #ededed;
}

.tree-scroll {
    width: 15px;
}

.up,
.down,
.left,
.right {
    flex: none;
    width: 0;
    height: 0;
    border: 4px solid transparent;
}

.up {
    margin: 8px 0 7px;
    border-bottom-color: #444;
    border-top: 0;
}

.down {
    margin: auto 0 6px;
    border-top-color: #444;
    border-bottom: 0;
}

.left {
    border-right-color: #999;
    border-left: 0;
}

.right {
    border-left-color: #444;
    border-right: 0;
}

.thumb {
    display: flex;
    align-items: center;
    justify-content: center;
    width: 15px;
    height: 210px;
    border: 1px solid #909090;
    border-radius: 2px;
    background: linear-gradient(90deg, #f2f2f2, #c4c6cb);
}

.thumb b {
    width: 7px;
    height: 7px;
    background: repeating-linear-gradient(#666 0 1px, #ddd 1px 3px);
}

.props-scroll .thumb {
    height: 400px;
}

.drawing {
    display: flex;
    flex: 1;
    min-width: 0;
    padding-top: 2px;
    background: #888;
    border-left: 1px solid #888;
}

.canvas {
    position: relative;
    flex: 1;
    min-width: 0;
    background: #000;
}

.plan {
    display: block;
}

.tag {
    font-family: "Liberation Sans", Arial, sans-serif;
    font-size: 64px;
    fill: #ff0;
    stroke: #ff0;
}

.two {
    font-size: 88px;
}

.mdi-buttons {
    position: absolute;
    top: 8px;
    right: 3px;
    display: flex;
    gap: 6px;
}

.properties {
    display: flex;
    flex-direction: column;
    width: 220px;
    margin-left: 2px;
    color: #111;
}

.props-box {
    display: flex;
    flex: 1;
    flex-direction: column;
    min-height: 0;
    margin: 3px 0 20px 1px;
    border: 1px solid #777;
    border-right: 0;
    background: #f0f0f0;
    overflow: hidden;
}

.type-selector {
    justify-content: flex-start;
    flex: none;
    gap: 4px;
    height: 73px;
    margin-right: 2px;
    padding: 0 2px;
    border: 1px solid #ccc;
    background: linear-gradient(#f8f8f8, #ededed);
}

.type-selector .caret {
    margin-left: auto;
}

.type-pic {
    display: grid;
    place-items: center;
    width: 66px;
    height: 66px;
    border: 1px solid #ccc;
}

.instance-row {
    display: flex;
    flex: none;
    align-items: center;
    gap: 6px;
    height: 24px;
}

.instance-row select {
    width: 132px;
    height: 22px;
    padding: 0;
    border: 1px solid #707070;
    border-radius: 3px;
    background: linear-gradient(#f2f2f2, #cfcfcf);
}

.edit-type {
    gap: 5px;
}

.props-scroll {
    display: flex;
    flex: 1;
    min-height: 0;
    gap: 1px;
    overflow: hidden;
}

.props {
    flex: 1;
    align-self: flex-start;
    table-layout: fixed;
    border-collapse: collapse;
    background: #fff;
    line-height: 17px;
    white-space: nowrap;
}

.props th {
    padding: 0 6px 0 4px;
    background: #dcdcdc;
    font-weight: normal;
    text-align: left;
}

.props th svg {
    float: right;
    margin-top: 4px;
}

.props td {
    width: 50%;
    height: 18px;
    padding: 0 0 0 10px;
    border-bottom: 1px dotted #777;
    border-right: 1px dotted #777;
}

.props td + td {
    padding-left: 4px;
}

.props .off {
    color: #888;
}

.props td.focus {
    outline: 1px solid #000;
    outline-offset: -1px;
}

.props td.has-btn {
    padding: 1px 1px 0;
}

.props td button {
    width: 100%;
    height: 16px;
    border: 1px solid #707070;
    border-radius: 3px;
    background: linear-gradient(#f2f2f2, #cfcfcf);
}

.status-bar {
    height: 24px;
    padding-left: 2px;
    border-top: 1px solid #aaa;
    background: #f0f0f0;
    line-height: 22px;
}

/* ---------- Browser ---------- */

/* tint of the window frame, under the blurred window itself */
.glass,
.browser {
    position: absolute;
    top: 436px;
    right: -18px;
    bottom: 40px;
    left: 8px;
    border-radius: 7px 7px 0 0;
}

.glass {
    background: linear-gradient(#d4e8ff, #b4d7fc 40px, #dcebfd 80px, #dcebfd 174px, #b4d4fa 175px);
    mix-blend-mode: multiply;
}

.browser {
    display: flex;
    flex-direction: column;
    padding: 0 7px;
    border: 1px solid #30343a;
    border-bottom: 0;
    background: rgba(170, 210, 255, 0.06);
    backdrop-filter: blur(2px);
    box-shadow: inset 1px 1px #eef6ff, 0 0 6px 2px rgba(0, 0, 0, 0.6);
}

.caption {
    display: flex;
    justify-content: flex-end;
    gap: 7px;
    height: 19px;
}

.cap {
    width: 27px;
    height: 18px;
    border-right: 1px solid #56677a;
    background: linear-gradient(#dfe9f4, #c2d2e4 50%, #9fb5cc 50%, #c4d6ea);
}

.cap-group {
    display: flex;
    align-self: flex-start;
    border: 1px solid #56677a;
    border-top: 0;
    border-radius: 0 0 5px 5px;
    overflow: hidden;
}

.cap.user {
    width: 24px;
    border: 1px solid #56677a;
    border-top: 0;
    border-radius: 0 0 5px 5px;
}

.cap.close {
    width: 43px;
    background: linear-gradient(#e3a59b, #d4705f 50%, #b92f1a 50%, #d86a4c);
}

.tab-strip {
    display: flex;
    height: 27px;
}

.coccoc {
    justify-content: flex-start;
    width: 89px;
    margin-left: -2px;
    border: 1px solid #1f8f3a;
    background: linear-gradient(90deg, #3eb34a, #86c440);
    color: #fff;
    font-size: 16px;
    font-weight: bold;
}

.tab {
    display: flex;
    align-items: center;
    gap: 5px;
    width: 188px;
    padding: 0 8px 0 9px;
    border-right: 1px solid #222;
    background: #aeb0b0;
    color: #444;
    white-space: nowrap;
}

.tab span {
    flex: 1;
    overflow: hidden;
}

.tab:not(.active) span {
    mask-image: linear-gradient(90deg, #000 85%, transparent);
}

.tab.active {
    padding-left: 6px;
    gap: 4px;
    background: #fcfcfc;
    color: #222;
}

.tab button {
    width: 9px;
}

.new-tab {
    width: 32px;
}

.toolbar {
    display: flex;
    align-items: center;
    height: 36px;
    padding-left: 3px;
    border-bottom: 1px solid #9a9a9a;
    background: #fcfcfc;
}

.toolbar > button {
    width: 29px;
}

.address {
    display: flex;
    flex: 1;
    align-items: center;
    gap: 6px;
    height: 27px;
    margin-left: 4px;
    padding-left: 7px;
    border: 1px solid #bbb;
    background: #fff;
}

.address a {
    flex: 1;
    font-size: 15px;
    line-height: 20px;
    padding-bottom: 1px;
    color: #111;
    text-decoration: none;
}

.address a span {
    color: #888;
}

.spell {
    color: #3c9a00;
    font-size: 16px;
    line-height: 20px;
}

.save-page {
    width: 29px;
    height: 27px;
    margin-left: -2px;
    border: 1px solid #999;
    background: #c4c4c4;
}

.toolbar .downloads {
    width: 32px;
    padding-left: 4px;
}

.viewport {
    display: grid;
    flex: 1;
    grid-template-columns: minmax(0, 1fr) 17px;
    grid-template-rows: minmax(0, 1fr) 14px;
    min-height: 0;
    background: #f0f0f0;
    font-family: "Liberation Sans", Arial, sans-serif;
}

.page {
    background: #fff;
    color: #333;
    line-height: 20px;
    overflow: hidden;
}

.navbar {
    display: flex;
    height: 41px;
    background: linear-gradient(#222, #111);
    border-bottom: 1px solid #252525;
    box-shadow: 0 1px 10px rgba(0, 0, 0, 0.1);
}

.navbar a {
    padding: 10px 15px;
    color: #999;
    text-decoration: none;
}

.navbar a + a {
    margin-left: 10px;
}

.navbar .active {
    background: #111;
    color: #fff;
    -webkit-text-stroke: 0.3px #fff;
}

.columns {
    display: flex;
    gap: 30px;
    width: calc(100% + 13px);
    padding-top: 19px;
}

.sidebar {
    flex: none;
    align-self: flex-start;
    width: 170px;
    border: 1px solid #e5e5e5;
    border-left: 0;
}

.sidebar a {
    display: block;
    height: 36px;
    padding: 7px 6px;
    border-bottom: 1px solid #e5e5e5;
    color: #08c;
    text-decoration: none;
}

.sidebar a:last-child {
    height: 35px;
    border-bottom: 0;
}

.sidebar .active {
    background: #f5f6f8;
}

.content {
    flex: 1;
    min-width: 0;
}

.content h3 {
    height: 20px;
    margin: 10px 0;
    font-size: 15px;
    line-height: 20px;
}

.grid {
    width: 100%;
    table-layout: fixed;
    border-collapse: collapse;
}

.grid th,
.grid td {
    padding: 4px;
    border: 1px solid #a9a9a9;
    border-width: 0 1px 1px;
    text-align: left;
    vertical-align: top;
}

.grid th {
    background: #0069c0;
    color: #fff;
}

.grid td {
    border-bottom-color: #ddd;
}

.c-num { width: 16px; }
.c-shop { width: 225px; }
.c-del { width: 23px; }
.c-id { width: 33px; }
.c-date { width: 90px; }
.c-store { width: 75px; }
.c-note { width: 261px; }
.c-state { width: 99px; }

.order .row-no {
    color: #8a5a2a;
}

.order .trash {
    padding: 4px 3px;
}

.store-input {
    display: block;
    width: 100%;
    height: 25px;
    border: 1px solid #ccc;
    background: linear-gradient(#eee 50%, #e2e2e2 50%, #ececec);
}

.order textarea {
    display: block;
    width: 97%;
    height: 35px;
    margin-bottom: 10px;
    border: 1px solid #ccc;
    border-radius: 4px;
    box-shadow: inset 0 1px 1px rgba(0, 0, 0, 0.08);
}

.btn {
    height: 30px;
    padding: 0 12px;
    border: 1px solid #c5c5c5;
    border-radius: 4px;
    background: linear-gradient(#fff, #e6e6e6);
    box-shadow: 0 1px 2px rgba(0, 0, 0, 0.08);
    font-size: 14px;
}

.add-row .btn {
    margin-left: auto;
}

.save {
    margin: 4px 0 35px 4px;
}

.grid a {
    color: #2a7fc4;
    text-decoration: none;
}

.history tbody tr {
    height: 95px;
}

.history .num {
    padding-right: 9px;
    text-align: right;
}

.v-scroll {
    display: flex;
    flex-direction: column;
    align-items: center;
}

.v-scroll span {
    width: 13px;
    height: 107px;
    background: #bbb;
    border: 1px solid #a4a4a4;
}

.v-scroll .up {
    border-bottom-color: #999;
    margin: 8px 0 5px;
}

.h-scroll {
    display: flex;
    align-items: center;
    gap: 7px;
    padding: 0 7px;
}

.h-scroll span {
    flex: 1;
    height: 12px;
    border: 1px solid #a4a4a4;
    background: #bbb;
    margin-right: 12px;
}

/* ---------- Taskbar ---------- */

.taskbar {
    position: relative;
    display: flex;
    flex: none;
    align-items: center;
    height: 40px;
    border-top: 1px solid #0e1c2a;
    background:
        linear-gradient(rgba(255, 255, 255, 0.35), rgba(0, 10, 25, 0.45) 12px, rgba(0, 10, 25, 0.3) 18px, transparent 36px),
        linear-gradient(90deg, #3187ad, #3a7ba4 30%, #2266a0 60%, #1a4f8c 80%, #154578);
    color: #fff;
}

.start {
    width: 54px;
}

.pin {
    width: 53px;
}

.pin.ie {
    width: 59px;
}

.task {
    justify-content: flex-start;
    gap: 4px;
    width: 66px;
    height: 38px;
    margin-right: 3px;
    padding-left: 3px;
    border: 1px solid rgba(220, 235, 250, 0.6);
    border-radius: 3px;
    background: linear-gradient(rgba(255, 255, 255, 0.45), rgba(255, 255, 255, 0.15) 45%, rgba(255, 255, 255, 0.05) 50%, rgba(255, 255, 255, 0.1));
    box-shadow: 0 0 0 1px rgba(0, 15, 35, 0.5);
}

.task.icon-only {
    justify-content: center;
    width: 58px;
    padding: 0;
}

.task.stacked {
    margin-right: 10px;
    box-shadow: 0 0 0 1px rgba(0, 15, 35, 0.5), 4px 0 0 -1px #5d8fb5, 5px 0 0 -1px #1c3f60;
}

.task.current {
    background: linear-gradient(135deg, #e9eff5, #a5bccf 50%, #8aaac2 50%, #b9cfe0);
    width: 60px;
    margin-right: 8px;
}

.addr-label {
    margin: 0 5px 0 8px;
}

.addr-box {
    display: flex;
    flex: 1;
    align-items: center;
    height: 23px;
    padding-right: 5px;
    border: 1px solid #345;
    background: #fff;
}

.addr-box input {
    flex: 1;
    min-width: 0;
    border: 0;
    outline: 0;
    color: #000;
}

.addr-box .caret {
    border-top-color: #000;
}

.refresh {
    width: 25px;
    height: 22px;
    background: #f4f8fc;
    border: 1px solid #9ab;
}

.lang {
    margin: 0 15px 4px 12px;
}

.tray {
    display: flex;
    gap: 9px;
}

.tray button:first-child {
    margin-right: 3px;
}

time {
    width: 62px;
    margin: 0 9px 0 16px;
    line-height: 17px;
    text-align: center;
}

.show-desktop {
    width: 15px;
    height: 39px;
    border: 1px solid #0a2038;
    background: linear-gradient(#5f88aa, #1d4a78);
}
```
